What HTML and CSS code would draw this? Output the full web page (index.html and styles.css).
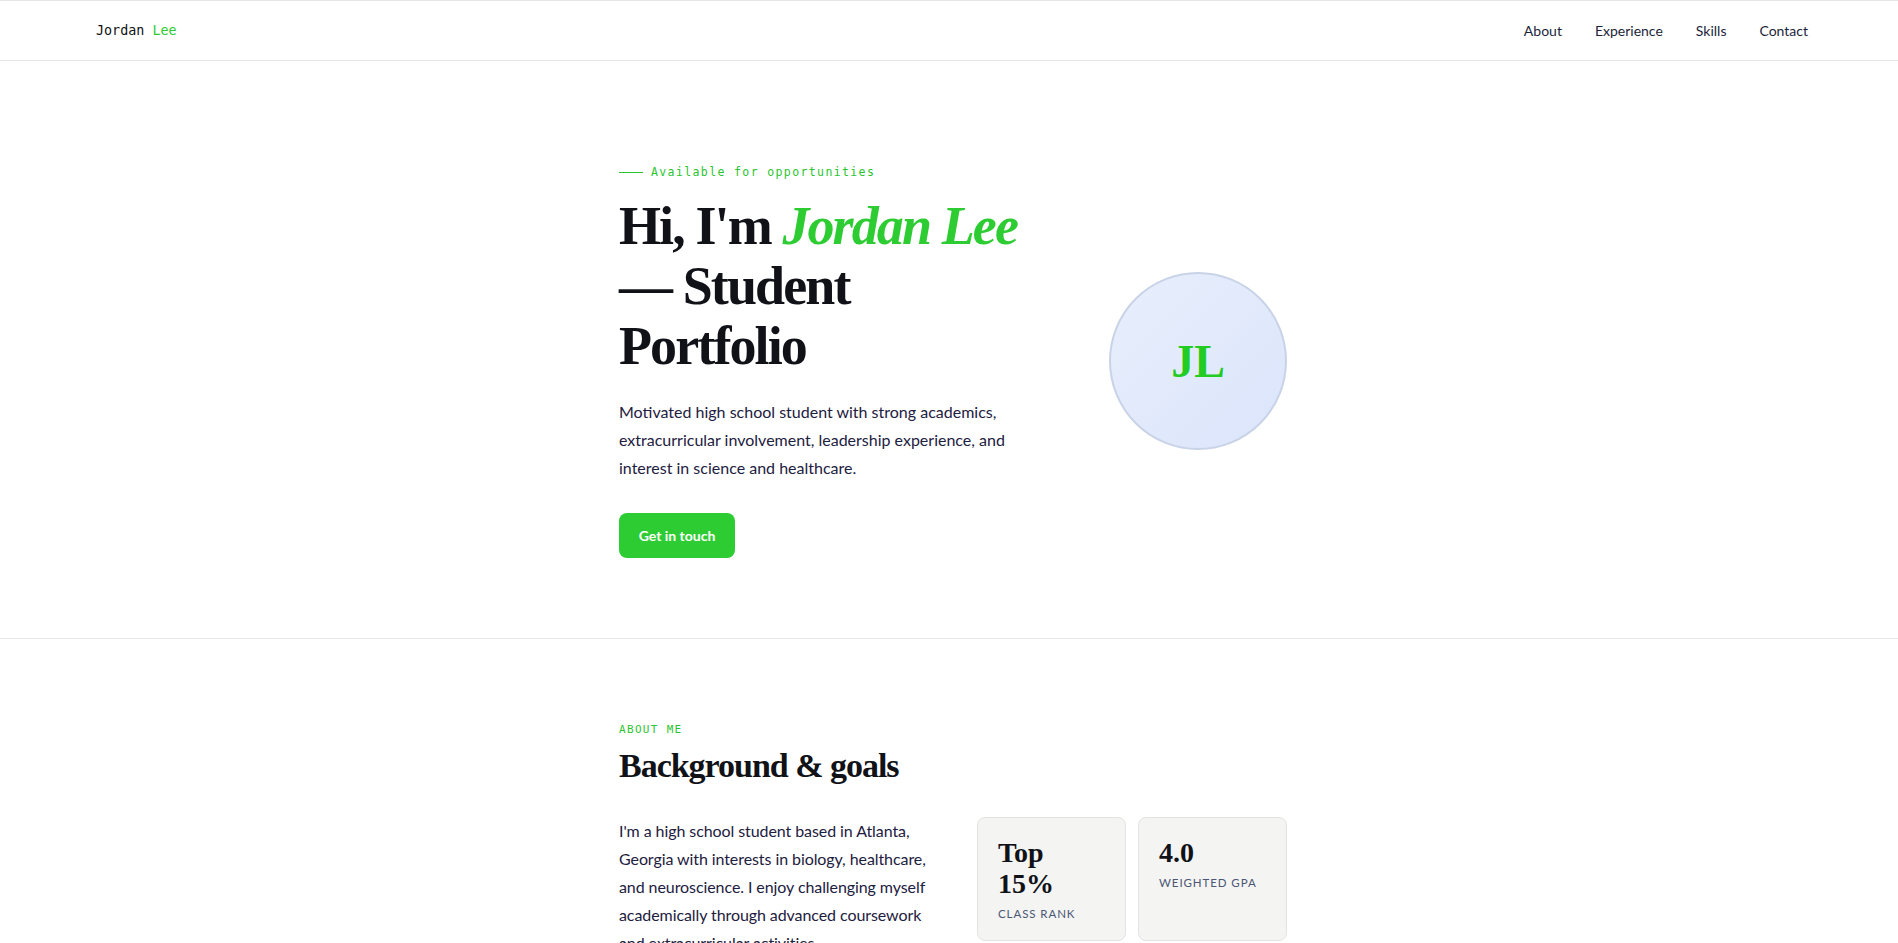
FILE: index.html
```html
<!DOCTYPE html>
<html lang="en">
<head>
<meta charset="utf-8">
<title>Jordan Lee — Student Portfolio</title>
<link rel="stylesheet" href="styles.css">
</head>
<body>
<header class="site-header">
  <a class="logo" href="#">Jordan <span class="accent">Lee</span></a>
  <nav class="nav">
    <a href="#about">About</a>
    <a href="#experience">Experience</a>
    <a href="#skills">Skills</a>
    <a href="#contact">Contact</a>
  </nav>
</header>

<section class="hero">
  <div class="container hero-inner">
    <div class="hero-text">
      <p class="eyebrow"><span class="eyebrow-line"></span>Available for opportunities</p>
      <h1 class="hero-title">Hi, I'm <em class="accent">Jordan Lee</em> — Student Portfolio</h1>
      <p class="hero-lead">Motivated high school student with strong academics, extracurricular involvement, leadership experience, and interest in science and healthcare.</p>
      <a class="btn" href="#contact">Get in touch</a>
    </div>
    <div class="avatar"><span>JL</span></div>
  </div>
</section>

<section class="about" id="about">
  <div class="container">
    <p class="section-label">About me</p>
    <h2 class="section-title">Background &amp; goals</h2>
    <div class="about-grid">
      <p class="about-text">I'm a high school student based in Atlanta, Georgia with interests in biology, healthcare, and neuroscience. I enjoy challenging myself academically through advanced coursework and extracurricular activities.</p>
      <div class="stats">
        <div class="stat">
          <div class="stat-value">Top 15%</div>
          <div class="stat-label">Class rank</div>
        </div>
        <div class="stat">
          <div class="stat-value">4.0</div>
          <div class="stat-label">Weighted GPA</div>
        </div>
      </div>
    </div>
  </div>
</section>
</body>
</html>
```

FILE: styles.css
```css
* { box-sizing: border-box; }

html, body { margin: 0; padding: 0; }

body {
  font-family: "Lato", "Noto Sans", sans-serif;
  color: #1d2040;
  background: #ffffff;
}

a { color: inherit; text-decoration: none; }

.accent { color: #2ecc33; }

.container {
  width: 676px;
  margin: 0 auto;
  padding-left: 8px;
}

/* header */
.site-header {
  height: 61px;
  border-top: 1px solid #e6e6e6;
  border-bottom: 1px solid #e6e6e6;
  display: flex;
  align-items: center;
  justify-content: space-between;
  padding: 0 90px 0 96px;
}

.logo {
  font-family: "DejaVu Sans Mono", "Liberation Mono", monospace;
  font-size: 13.4px;
  color: #111111;
}

.nav {
  display: flex;
  gap: 33px;
  font-size: 14px;
  color: #1b1f3a;
}

/* hero */
.hero {
  border-bottom: 1px solid #e8e8e8;
  padding: 103px 0 80px;
}

.hero-inner {
  display: flex;
  align-items: center;
  justify-content: space-between;
}

.hero-text { width: 420px; }

.eyebrow {
  margin: 0;
  display: flex;
  align-items: center;
  gap: 8px;
  font-family: "DejaVu Sans Mono", "Liberation Mono", monospace;
  font-size: 11.5px;
  letter-spacing: 0.12em;
  line-height: 16px;
  color: #2bc531;
}

.eyebrow-line {
  width: 24px;
  height: 1px;
  background: #2bc531;
}

.hero-title {
  margin: 16px 0 0;
  font-family: "Liberation Serif", "Times New Roman", serif;
  font-weight: 700;
  font-size: 54px;
  line-height: 60px;
  letter-spacing: -0.035em;
  color: #101218;
}

.hero-title em { font-style: italic; }

.hero-lead {
  margin: 22px 0 0;
  font-size: 16px;
  line-height: 28px;
  max-width: 400px;
}

.btn {
  display: inline-flex;
  align-items: center;
  justify-content: center;
  margin-top: 31px;
  width: 116px;
  height: 45px;
  border-radius: 8px;
  background: #2ecc33;
  color: #ffffff;
  font-size: 14px;
  font-weight: 700;
}

.avatar {
  width: 178px;
  height: 178px;
  border-radius: 50%;
  border: 2px solid #c9d3e7;
  background: linear-gradient(135deg, #e8eefc 0%, #dbe5fb 100%);
  display: flex;
  align-items: center;
  justify-content: center;
  font-family: "Liberation Serif", "Times New Roman", serif;
  font-weight: 700;
  font-size: 46px;
  color: #22cc22;
}

/* about */
.about { padding: 84px 0 80px; }

.section-label {
  margin: 0;
  font-family: "DejaVu Sans Mono", "Liberation Mono", monospace;
  font-size: 11px;
  letter-spacing: 0.12em;
  line-height: 14px;
  text-transform: uppercase;
  color: #2bc531;
}

.section-title {
  margin: 8px 0 0;
  font-family: "Liberation Serif", "Times New Roman", serif;
  font-weight: 700;
  font-size: 34px;
  line-height: 42px;
  letter-spacing: -0.03em;
  color: #101218;
}

.about-grid {
  margin-top: 30px;
  display: grid;
  grid-template-columns: 320px 310px;
  justify-content: space-between;
  align-items: start;
}

.about-text {
  margin: 0;
  font-size: 16px;
  line-height: 28px;
  letter-spacing: -0.005em;
}

.stats {
  display: grid;
  grid-template-columns: 1fr 1fr;
  gap: 12px;
}

.stat {
  background: #f4f4f2;
  border: 1px solid #e3e3e1;
  border-radius: 8px;
  padding: 19px 20px 20px;
}

.stat-value {
  font-family: "Liberation Serif", "Times New Roman", serif;
  font-weight: 700;
  font-size: 28px;
  line-height: 31px;
  color: #101218;
}

.stat-label {
  margin-top: 8px;
  font-size: 11.5px;
  letter-spacing: 0.08em;
  text-transform: uppercase;
  color: #4b5675;
}
```
